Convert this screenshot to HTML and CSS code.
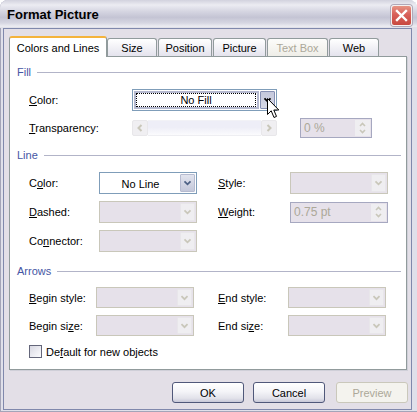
FILE: index.html
```html
<!DOCTYPE html>
<html lang="en">
<head>
<meta charset="UTF-8">
<meta name="viewport" content="width=device-width, initial-scale=1.0">
<title>Format Picture</title>
<link rel="stylesheet" href="styles.css">
</head>
<body>

<div class="window">
    <div class="titlebar">
        <span class="title">Format Picture</span>
        <span class="close-btn">
            <svg width="19" height="19" viewBox="0 0 19 19"><path d="M5 5 L14 14 M14 5 L5 14" stroke="#fff" stroke-width="2.4" stroke-linecap="square"/></svg>
        </span>
    </div>

    <div class="client">
        <div class="tabs">
            <div class="tab selected tab-colors">Colors and Lines</div>
            <div class="tab tab-size">Size</div>
            <div class="tab tab-position">Position</div>
            <div class="tab tab-picture">Picture</div>
            <div class="tab tab-textbox disabled">Text Box</div>
            <div class="tab tab-web">Web</div>
        </div>

        <div class="panel">
            <!-- Fill -->
            <div class="group-head"><span>Fill</span></div>
            <div class="fill-rows">
                <div class="row">
                    <span class="lbl lbl-fill"><u>C</u>olor:</span>
                    <div class="combo focused combo-fill">
                        <span class="combo-text"><span class="focus-box">No Fill</span></span>
                        <span class="drop pressed">
                            <svg width="15" height="18" viewBox="0 0 15 18"><polyline points="4,7 7.5,10.5 11,7" fill="none" stroke="#000" stroke-width="2"/></svg>
                        </span>
                    </div>
                </div>
                <div class="row row-second">
                    <span class="lbl lbl-fill"><u>T</u>ransparency:</span>
                    <div class="slider">
                        <span class="sbtn">
                            <svg width="14" height="14" viewBox="0 0 14 14"><polyline points="8.5,4 5.5,7 8.5,10" fill="none" stroke="#c9c7ba" stroke-width="2"/></svg>
                        </span>
                        <span class="track"></span>
                        <span class="sbtn">
                            <svg width="14" height="14" viewBox="0 0 14 14"><polyline points="5.5,4 8.5,7 5.5,10" fill="none" stroke="#c9c7ba" stroke-width="2"/></svg>
                        </span>
                    </div>
                    <div class="spin spin-pct">
                        <span class="spin-text">0 %</span>
                        <span class="spin-btns">
                            <svg width="13" height="16" viewBox="0 0 13 16"><polyline points="4,6 6.5,3.5 9,6" fill="none" stroke="#c9c7ba" stroke-width="1.6"/><polyline points="4,10 6.5,12.5 9,10" fill="none" stroke="#c9c7ba" stroke-width="1.6"/></svg>
                        </span>
                    </div>
                </div>
            </div>

            <!-- Line -->
            <div class="group-head head-line"><span>Line</span></div>
            <div class="grid grid-line">
                <span class="lbl">C<u>o</u>lor:</span>
                <div class="combo">
                    <span class="combo-text">No Line</span>
                    <span class="drop">
                        <svg width="15" height="18" viewBox="0 0 15 18"><polyline points="4,7 7.5,10.5 11,7" fill="none" stroke="#4d6185" stroke-width="2"/></svg>
                    </span>
                </div>
                <span class="lbl lbl-right"><u>S</u>tyle:</span>
                <div class="combo disabled">
                    <span class="combo-text"></span>
                    <span class="drop">
                        <svg width="15" height="18" viewBox="0 0 15 18"><polyline points="4,7 7.5,10.5 11,7" fill="none" stroke="#c9c7ba" stroke-width="2"/></svg>
                    </span>
                </div>

                <span class="lbl"><u>D</u>ashed:</span>
                <div class="combo disabled">
                    <span class="combo-text"></span>
                    <span class="drop">
                        <svg width="15" height="18" viewBox="0 0 15 18"><polyline points="4,7 7.5,10.5 11,7" fill="none" stroke="#c9c7ba" stroke-width="2"/></svg>
                    </span>
                </div>
                <span class="lbl lbl-right"><u>W</u>eight:</span>
                <div class="spin">
                    <span class="spin-text">0.75 pt</span>
                    <span class="spin-btns">
                        <svg width="13" height="18" viewBox="0 0 13 18"><polyline points="4,7 6.5,4.5 9,7" fill="none" stroke="#c9c7ba" stroke-width="1.6"/><polyline points="4,11 6.5,13.5 9,11" fill="none" stroke="#c9c7ba" stroke-width="1.6"/></svg>
                    </span>
                </div>

                <span class="lbl">Co<u>n</u>nector:</span>
                <div class="combo disabled">
                    <span class="combo-text"></span>
                    <span class="drop">
                        <svg width="15" height="18" viewBox="0 0 15 18"><polyline points="4,7 7.5,10.5 11,7" fill="none" stroke="#c9c7ba" stroke-width="2"/></svg>
                    </span>
                </div>
            </div>

            <!-- Arrows -->
            <div class="group-head head-arrows"><span>Arrows</span></div>
            <div class="grid grid-arrows">
                <span class="lbl"><u>B</u>egin style:</span>
                <div class="combo disabled">
                    <span class="combo-text"></span>
                    <span class="drop">
                        <svg width="15" height="17" viewBox="0 0 15 17"><polyline points="4,7 7.5,10.5 11,7" fill="none" stroke="#c9c7ba" stroke-width="2"/></svg>
                    </span>
                </div>
                <span class="lbl lbl-right"><u>E</u>nd style:</span>
                <div class="combo disabled">
                    <span class="combo-text"></span>
                    <span class="drop">
                        <svg width="15" height="17" viewBox="0 0 15 17"><polyline points="4,7 7.5,10.5 11,7" fill="none" stroke="#c9c7ba" stroke-width="2"/></svg>
                    </span>
                </div>

                <span class="lbl">Begin si<u>z</u>e:</span>
                <div class="combo disabled">
                    <span class="combo-text"></span>
                    <span class="drop">
                        <svg width="15" height="17" viewBox="0 0 15 17"><polyline points="4,7 7.5,10.5 11,7" fill="none" stroke="#c9c7ba" stroke-width="2"/></svg>
                    </span>
                </div>
                <span class="lbl lbl-right">End si<u>z</u>e:</span>
                <div class="combo disabled">
                    <span class="combo-text"></span>
                    <span class="drop">
                        <svg width="15" height="17" viewBox="0 0 15 17"><polyline points="4,7 7.5,10.5 11,7" fill="none" stroke="#c9c7ba" stroke-width="2"/></svg>
                    </span>
                </div>
            </div>

            <div class="check-row">
                <span class="checkbox"></span>
                <span class="lbl">De<u>f</u>ault for new objects</span>
            </div>
        </div>

        <div class="buttons">
            <div class="btn">OK</div>
            <div class="btn btn-cancel">Cancel</div>
            <div class="btn btn-preview disabled">Preview</div>
        </div>
    </div>
</div>

<!-- mouse pointer over the Fill colour drop button -->
<svg class="cursor" width="13" height="21" viewBox="0 0 13 21">
    <polygon points="0.5,0.5 0.5,16.5 4.2,12.8 7,19.5 9.5,18.4 6.8,12 11.8,12" fill="#fff" stroke="#000" stroke-width="1"/>
</svg>

</body>
</html>
```

FILE: styles.css
```css
body {
    margin: 0;
    background: #fff;
    font-family: "Liberation Sans", Arial, sans-serif;
    font-size: 11px;
    color: #000;
}
u {
    text-decoration: underline;
    text-underline-offset: 1px;
}
.window {
    width: 417px;
    height: 412px;
    box-sizing: border-box;
    display: flex;
    flex-direction: column;
    background: #e0e0ea;
    border-radius: 8px 8px 0 0;
    box-shadow: inset 1px 0 #a4a4b8, inset 0 -1px #a4a4b8;
    overflow: hidden;
}
.titlebar {
    height: 28px;
    flex-shrink: 0;
    display: flex;
    align-items: center;
    justify-content: space-between;
    padding: 0 5px 0 7px;
    box-sizing: border-box;
    background: linear-gradient(#d2d2de 0%, #ececf2 18%, #d6d6e2 40%, #c4c4d4 62%, #d6d6e2 82%, #ececf2 94%, #dcdce6 100%);
}
.title {
    font-weight: bold;
    font-size: 13px;
    margin-top: 1px;
    text-shadow: 1px 1px 0 #c8c8d4;
}
.close-btn {
    width: 21px;
    height: 21px;
    margin-top: 2px;
    box-sizing: border-box;
    display: flex;
    align-items: center;
    justify-content: center;
    border: 1px solid #f4f0f0;
    border-radius: 3px;
    background: linear-gradient(#e69484 0%, #d8605a 45%, #c8483f 100%);
    box-shadow: 0 0 0 1px #b0a8b8;
}
.client {
    flex: 1;
    margin: 0 5px 2px 3px;
    border: 1px solid #8088ac;
    background: #e3dfe7;
    display: flex;
    flex-direction: column;
}

/* tabs */
.tabs {
    display: flex;
    align-items: flex-end;
    height: 20px;
    margin: 7px 0 0 5px;
}
.tab {
    height: 18px;
    box-sizing: border-box;
    border: 1px solid #919b9c;
    border-bottom: none;
    border-radius: 3px 3px 0 0;
    background: linear-gradient(#ffffff, #e4e3ed);
    display: flex;
    align-items: center;
    justify-content: center;
    margin-left: 1px;
    padding-top: 1px;
}
.tab.selected {
    height: 21px;
    margin-left: 0;
    margin-bottom: -1px;
    background: #fff;
    border-top: 2px solid #f4b33c;
    padding-top: 0;
    position: relative;
    z-index: 1;
}
.tab.disabled {
    color: #aca899;
    background: linear-gradient(#fcfcfa, #efeee8);
}
.tab-colors { width: 98px; }
.tab-size { width: 50px; margin-left: 0; }
.tab-position { width: 54px; }
.tab-picture { width: 53px; }
.tab-textbox { width: 61px; }
.tab-web { width: 50px; }

.panel {
    width: 398px;
    height: 314px;
    box-sizing: border-box;
    margin-left: 5px;
    border: 1px solid #919b9c;
    background: #fff;
    padding: 8px 5px 0 7px;
    box-shadow: 1px 1px 0 #cfcfd8;
}
.group-head {
    height: 14px;
    display: flex;
    align-items: center;
    gap: 6px;
    color: #4556a4;
}
.group-head::after {
    content: "";
    flex: 1;
    border-top: 1px solid #b2b4c8;
}
.head-line { margin-top: 9px; }
.head-arrows { margin-top: 12px; }

.lbl {
    white-space: nowrap;
}
.fill-rows {
    margin: 10px 0 0 12px;
}
.row {
    display: flex;
    align-items: center;
    height: 22px;
}
.row-second {
    margin-top: 6px;
}
.lbl-fill {
    width: 103px;
}

/* combo boxes */
.combo {
    height: 22px;
    box-sizing: border-box;
    border: 1px solid #7f9db9;
    background: #fff;
    display: flex;
    align-items: stretch;
    padding: 1px;
}
.combo-text {
    flex: 1;
    display: flex;
    align-items: center;
    justify-content: center;
    padding-top: 1px;
}
.drop {
    width: 15px;
    box-sizing: border-box;
    border: 1px solid #b6bbd0;
    border-radius: 1px;
    background: linear-gradient(#e2e4ee, #c4c8da);
    display: flex;
    align-items: center;
    justify-content: center;
}
.combo.disabled {
    border-color: #c9c7ba;
    background: #e6e1ea;
}
.combo.disabled .drop {
    border-color: #e8e6ea;
    background: #efeef1;
}
.combo-fill {
    width: 145px;
}
.combo.focused {
    padding: 1px;
}
.combo.focused .combo-text {
    background: #fff;
    padding: 2px;
    box-shadow: inset 0 0 0 2px #b5b9cf;
}
.focus-box {
    flex: 1;
    align-self: stretch;
    display: flex;
    align-items: center;
    justify-content: center;
    border: 1px dotted #000;
    margin-right: 1px;
}
.drop.pressed {
    border-color: #8690b4;
    background: linear-gradient(#c4c8dc, #d6d8e6);
    margin-left: 1px;
}

/* disabled scrollbar */
.slider {
    width: 145px;
    height: 16px;
    display: flex;
}
.sbtn {
    width: 16px;
    height: 16px;
    box-sizing: border-box;
    border: 1px solid #e8e7ea;
    border-radius: 2px;
    background: #f0eff2;
    display: flex;
    align-items: center;
    justify-content: center;
}
.track {
    flex: 1;
    background: linear-gradient(#eeeef7 0%, #eeeef7 45%, #fbfbfd 100%);
    border-top: 1px solid #f2f2f6;
    border-bottom: 1px solid #eeeef2;
}

/* disabled spinners */
.spin {
    height: 20px;
    box-sizing: border-box;
    border: 1px solid #a6a8c0;
    background: #e6e1ea;
    display: flex;
    color: #aca899;
    padding: 1px;
}
.spin-pct {
    width: 72px;
    margin-left: 23px;
}
.spin-text {
    flex: 1;
    display: flex;
    align-items: center;
    padding-left: 2px;
    font-size: 12px;
}
.spin-btns {
    width: 15px;
    background: #efeef1;
    display: flex;
    align-items: center;
    justify-content: center;
}

/* two-column groups */
.grid {
    display: grid;
    align-items: center;
    margin-left: 12px;
}
.grid-line {
    grid-template-columns: 70px 98px 93px 98px;
    grid-auto-rows: 22px;
    row-gap: 7px;
    margin-top: 10px;
}
.grid-line .spin {
    height: 21px;
}
.grid-arrows {
    grid-template-columns: 67px 98px 94px 98px;
    grid-auto-rows: 21px;
    row-gap: 7px;
    margin-top: 9px;
}
.grid-arrows .combo {
    height: 21px;
}
.grid-line .lbl-right {
    padding-left: 21px;
}
.grid-arrows .lbl-right {
    padding-left: 24px;
}
.check-row {
    display: flex;
    align-items: center;
    gap: 4px;
    height: 13px;
    margin: 9px 0 0 12px;
}
.checkbox {
    width: 13px;
    height: 13px;
    box-sizing: border-box;
    border: 1px solid #64667a;
    background: linear-gradient(135deg, #d8d8e2 0%, #eeeef3 60%, #fafafc 100%);
}

/* dialog buttons */
.buttons {
    display: flex;
    margin: 12px 0 0 168px;
}
.btn {
    width: 72px;
    height: 21px;
    box-sizing: border-box;
    border: 1px solid #50587a;
    border-radius: 3px;
    background: linear-gradient(#ffffff 0%, #f4f4f8 45%, #e2e2ea 80%, #c8c8d8 100%);
    display: flex;
    align-items: center;
    justify-content: center;
}
.btn-cancel {
    margin-left: 9px;
}
.btn-preview {
    margin-left: 11px;
}
.btn.disabled {
    border-color: #cac8bb;
    background: #f4f3ee;
    color: #aca899;
}

.cursor {
    position: absolute;
    left: 267px;
    top: 98px;
}
```
